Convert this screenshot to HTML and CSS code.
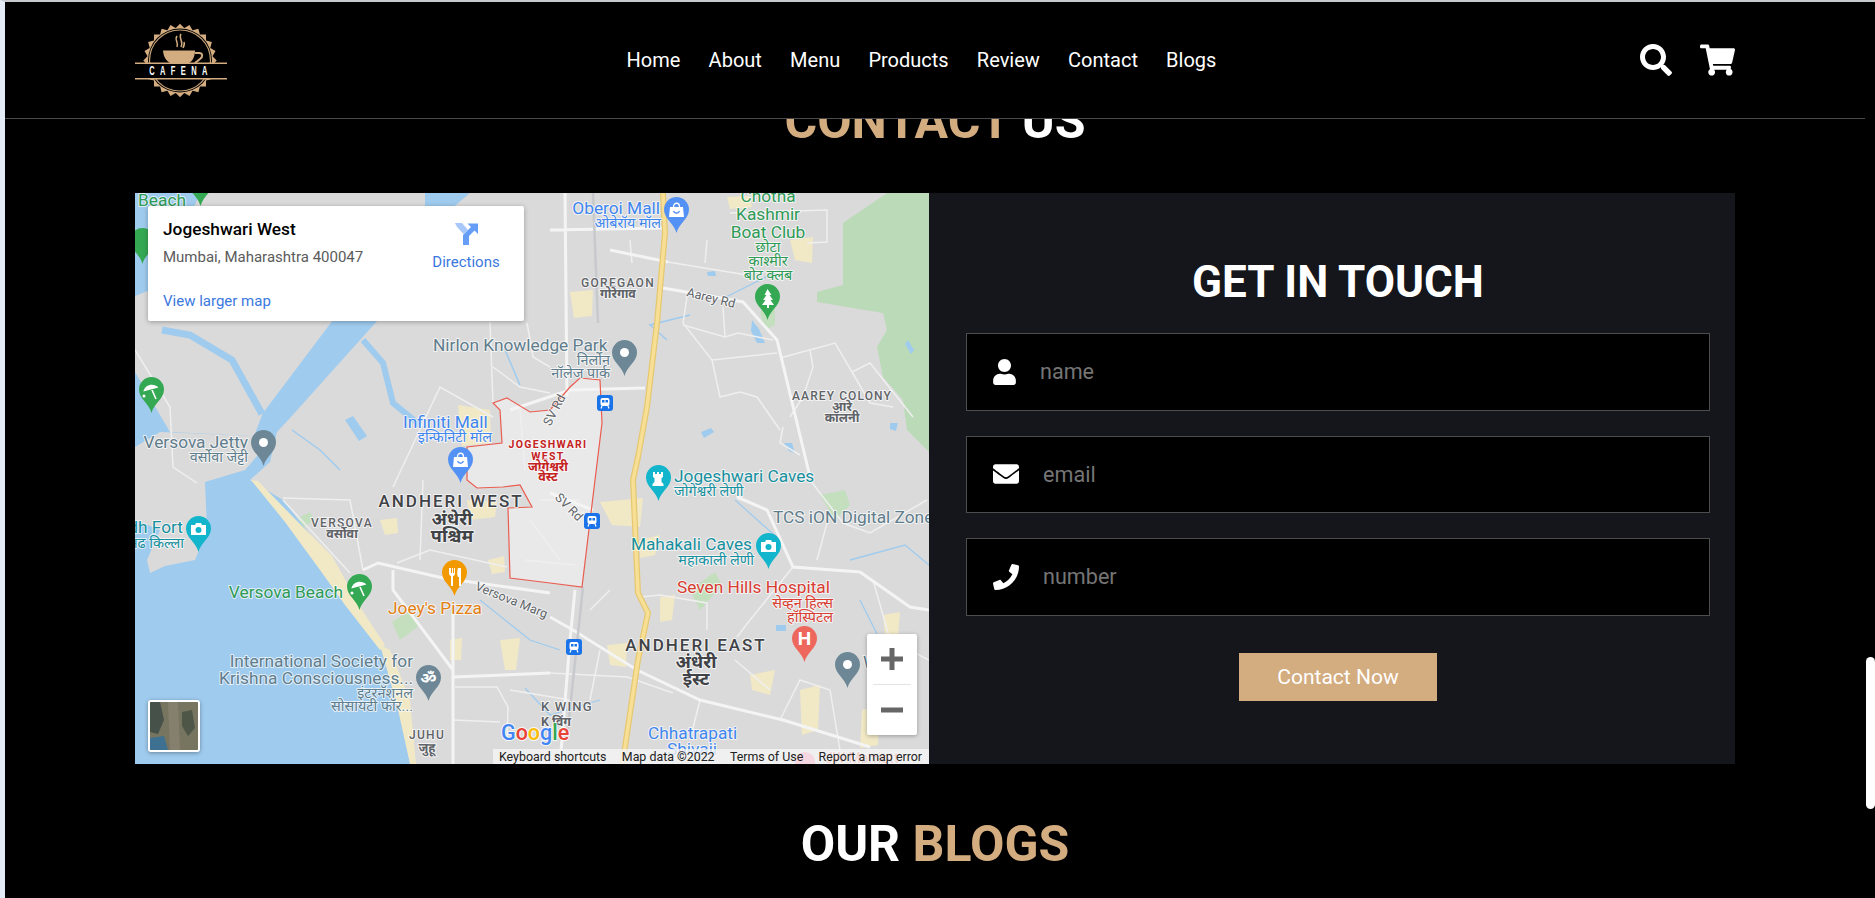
FILE: index.html
```html
<!DOCTYPE html>
<html lang="en">
<head>
    <meta charset="UTF-8">
    <meta name="viewport" content="width=device-width, initial-scale=1.0">
    <title>Cafena</title>
    <link rel="stylesheet" href="styles.css">
</head>
<body>

<header class="header">
    <a class="logo" href="#">
        <svg width="92" height="76" viewBox="135 21 92 76">
            <g fill="#d3ac7f">
                <rect x="154" y="32.500" width="52" height="52"/>
                <rect x="154" y="32.500" width="52" height="52" transform="rotate(15 180 58.500)"/>
                <rect x="154" y="32.500" width="52" height="52" transform="rotate(30 180 58.500)"/>
                <rect x="154" y="32.500" width="52" height="52" transform="rotate(45 180 58.500)"/>
                <rect x="154" y="32.500" width="52" height="52" transform="rotate(60 180 58.500)"/>
                <rect x="154" y="32.500" width="52" height="52" transform="rotate(75 180 58.500)"/>
            </g>
            <circle cx="180" cy="58.500" r="32" fill="#000"/>
            <circle cx="180" cy="58.500" r="30.500" fill="none" stroke="#c9a478" stroke-width="1.200"/>
            <path d="M163 48.500H195C195 55 192 60 188 61.500H171C166 59 163.500 55 163 48.500Z" fill="#d3ac7f"/>
            <path d="M195 51h4c4 0 4 4 1 6l-5 4" fill="none" stroke="#d3ac7f" stroke-width="2"/>
            <path d="M177 34c-3 4 2 6 0 11M181 32c-3 4 3 7 0 13M184 40c1 2 0 4-1 6" fill="none" stroke="#d3ac7f" stroke-width="1.500"/>
            <rect x="135" y="61" width="92" height="16" fill="#000"/>
            <rect x="135" y="60.500" width="92" height="1.500" fill="#d3ac7f"/>
            <rect x="135" y="76" width="92" height="1.500" fill="#d3ac7f"/>
            <text class="logo-text" transform="translate(181 73) scale(.6 1)" text-anchor="middle">CAFENA</text>
        </svg>
    </a>
    <nav class="nav">
        <a href="#">Home</a>
        <a href="#">About</a>
        <a href="#">Menu</a>
        <a href="#">Products</a>
        <a href="#">Review</a>
        <a href="#">Contact</a>
        <a href="#">Blogs</a>
    </nav>
    <div class="header-icons">
        <svg class="icon-search" viewBox="0 0 512 512"><path d="M505 442.700L405.300 343c-4.500-4.500-10.600-7-17-7H372c27.600-35.300 44-79.700 44-128C416 93.100 322.900 0 208 0S0 93.100 0 208s93.100 208 208 208c48.300 0 92.700-16.400 128-44v16.300c0 6.400 2.500 12.500 7 17l99.700 99.700c9.400 9.400 24.600 9.400 33.900 0l28.300-28.300c9.400-9.400 9.400-24.600.1-34zM208 336c-70.700 0-128-57.200-128-128 0-70.700 57.200-128 128-128 70.700 0 128 57.200 128 128 0 70.700-57.200 128-128 128z"/></svg>
        <svg class="icon-cart" viewBox="0 0 576 512"><path d="M528.120 301.319l47.273-208C578.806 78.301 567.391 64 551.990 64H159.208l-9.166-44.810C147.758 8.021 137.930 0 126.529 0H24C10.745 0 0 10.745 0 24v16c0 13.255 10.745 24 24 24h69.883l70.248 343.435C147.325 417.100 136 435.222 136 456c0 30.928 25.072 56 56 56s56-25.072 56-56c0-15.674-6.447-29.835-16.824-40h209.647C430.447 426.165 424 440.326 424 456c0 30.928 25.072 56 56 56s56-25.072 56-56c0-22.172-12.888-41.332-31.579-50.405l5.517-24.276c3.413-15.018-8.002-29.319-23.403-29.319H218.117l-6.545-32h293.145c11.206 0 20.920-7.754 23.403-18.681z"/></svg>
    </div>
</header>

<main class="main">
    <h1 class="heading"><span class="tan">CONTACT</span> US</h1>

    <section class="contact">
        <div class="map">
            <svg class="map-canvas" viewBox="135 193 794 571" width="794" height="571">
                <defs>
                    <path id="pin" d="M12.500 36C10 26 0 22 0 12.500A12.500 12.500 0 1 1 25 12.500C25 22 15 26 12.500 36Z"/>
                    <g id="metro">
                        <rect width="16" height="16" rx="3" fill="#1a73e8"/>
                        <rect x="3.500" y="3" width="9" height="8" rx="2" fill="#fff"/>
                        <rect x="5" y="5" width="2.500" height="2.500" fill="#1a73e8"/>
                        <rect x="8.500" y="5" width="2.500" height="2.500" fill="#1a73e8"/>
                        <path d="M5 11l-1 2.500M11 11l1 2.500" stroke="#fff" stroke-width="1.200"/>
                    </g>
                    <g id="bag">
                        <path d="M0 4h13l1 10H-1Z" fill="#fff"/>
                        <path d="M3.500 4c0-5 6-5 6 0" fill="none" stroke="#fff" stroke-width="1.300"/>
                        <path d="M3.500 8c1 3 5 3 6 0" fill="none" stroke="#5491f5" stroke-width="1.300"/>
                    </g>
                    <g id="brolly">
                        <path d="M3 12C3 5 11 1 17 5Z" fill="#fff" transform="rotate(12 10 8)"/>
                        <path d="M11 9l4 9" stroke="#fff" stroke-width="1.600"/>
                        <circle cx="3" cy="15" r="1.500" fill="#fff"/>
                    </g>
                    <g id="camera">
                        <path d="M0 3h4l1-2h5l1 2h4v10H0Z" fill="#fff"/>
                        <circle cx="7.500" cy="8" r="3" fill="#12b5cb"/>
                    </g>
                </defs>

                <rect x="135" y="193" width="794" height="571" fill="#dadada"/>

                <!-- forest on the right -->
                <path d="M887 193L843 223V285L817 292V302L883 313L887 330L877 347L883 377L903 400L907 430L929 452V193Z" fill="#bbdab8"/>

                <!-- sea and creeks -->
                <g fill="#9fcbee">
                    <path d="M135 193H200L180 240L150 290L135 296Z"/>
                    <path d="M135 372L153 403L170 432L254 436L263 413L333 320H378L290 418L277 432L270 462L250 480L283 500L330 560L357 603L380 643L387 667L400 707L410 764H135Z"/>
                    <path d="M425 193H470L450 210L425 215Z"/>
                    <path d="M353 790Z"/>
                    <path d="M752 320l7 9l6 14l-8 0l-6 -12Z"/>
                    <path d="M775 767Z"/>
                    <path d="M908 340l6 10l-3 4l-6 -10ZM890 423l8 0l-2 8l-6 -2ZM701 432l10 -4l3 4l-10 6ZM784 443l8 0l3 10l-6 -2ZM707 272l8 -1l1 5l-8 0ZM345 420l8 -4l14 20l-8 5ZM776 625h10v6h-10Z"/>
                </g>
                <g fill="none" stroke="#9fcbee">
                    <path d="M262 414L232 360L190 335L162 330" stroke-width="7"/>
                    <path d="M363 340L383 363L393 403L420 425" stroke-width="6"/>
                    <path d="M292 430L320 450L340 470M505 350L520 385M667 340L650 325L690 315" stroke-width="1.500"/>
                    <path d="M780 270L720 300M735 500L780 540M480 600L530 640L560 650M850 560L905 545L929 565M860 600L880 640L890 690M525 688L550 715L600 700" stroke-width="1.300"/>
                </g>

                <!-- islands -->
                <path d="M135 447L160 432L254 436L258 455L245 470L205 482L207 530L195 560L165 566L150 573L147 560L160 530L135 520Z" fill="#dadada"/>

                <!-- sand and built up patches -->
                <g fill="#f1e8c6">
                    <path d="M251 480L258 481L296 520L332 556L362 610L385 645L380 650L345 605L320 570L285 522Z"/>
                    <path d="M380 645L390 650L410 700L416 764H410L397 705Z"/>
                    <path d="M458 405L490 410L491 443L462 446Z"/>
                    <path d="M467 500L497 502L495 517L470 520Z"/>
                    <path d="M380 520L397 518L398 533L385 535Z"/>
                    <path d="M488 560L504 556L505 572L492 574Z"/>
                    <path d="M570 292L593 290L592 316L574 318Z"/>
                    <path d="M727 197L750 196L752 207L730 209Z"/>
                    <path d="M790 240L813 237L812 263L795 260Z"/>
                    <path d="M600 502L643 498L640 527L612 525Z"/>
                    <path d="M660 597L675 595L672 620L660 622Z"/>
                    <path d="M607 645L627 643L626 667L610 665Z"/>
                    <path d="M750 675L775 670L770 695L752 690Z"/>
                    <path d="M800 690L820 685L818 730L802 735Z"/>
                    <path d="M883 615L900 612L898 637L885 635Z"/>
                    <path d="M862 710L880 705L878 745L860 748Z"/>
                    <path d="M450 640L462 638L461 660L450 660Z"/>
                    <path d="M500 640L520 638L516 670L505 670Z"/>
                    <path d="M640 540L660 535L655 555L640 558Z"/>
                </g>

                <!-- small green parks -->
                <g fill="#c3dfbd">
                    <path d="M760 312L775 300L775 325L765 330Z"/>
                    <path d="M690 590L715 572L722 585L700 610Z"/>
                    <path d="M392 622L412 610L420 625L400 640Z"/>
                    <path d="M820 495L845 490L850 505L835 520Z"/>
                    <path d="M298 518L310 512L314 520L304 527Z"/>
                </g>

                <!-- district -->
                <path d="M493 403L507 398L530 412L550 410L570 387L580 378L600 380L602 423L595 480L582 587L550 583L510 578L508 508L532 507L520 485L503 487L477 488L467 480L467 447L502 443L500 410Z" fill="#e9e9e9"/>

                <!-- roads -->
                <g fill="none" stroke="#efefef" stroke-width="1.500">
                    <path d="M135 350L170 407L173 467L197 483"/>
                    <path d="M283 498L350 500L363 570M283 500L350 573"/>
                    <path d="M423 480L420 560M397 563L430 550L507 567M393 487L440 387L493 417M490 322L493 403M527 323L533 357L550 367M493 367L520 387L550 393"/>
                    <path d="M455 687L497 687L508 707L507 740M453 720L500 722M510 690L570 700"/>
                    <path d="M630 240L632 263M707 240L705 263M723 307L725 337M683 323L712 360L720 397L740 392L757 397L780 430"/>
                    <path d="M687 297L683 323M683 325L725 337L738 333L773 340M712 360L777 353M780 358L835 343L852 372L870 363L913 417"/>
                    <path d="M852 372L870 403L893 407M810 350L813 367L803 397L790 417M783 427L780 443L800 455"/>
                    <path d="M730 213L827 210L827 242L807 243M668 262L747 275"/>
                    <path d="M793 567L750 620L737 637M640 597L660 595L707 603L707 630M810 480L843 523L870 533L927 500M817 560L827 523"/>
                    <path d="M550 673L627 677L673 693M700 700L690 740M735 660L770 690M590 610L610 590M600 650L590 700"/>
                    <path d="M520 410L525 470M540 500L580 500M530 520L560 560M525 560L575 565"/>
                    <path d="M873 580L890 640L929 660M780 720L800 680L830 690L840 750"/>
                </g>
                <g fill="none" stroke="#f4f4f4" stroke-width="3">
                    <path d="M363 570L378 563L443 578L550 593"/>
                    <path d="M393 570L393 590L453 670M453 613L453 764M453 677L550 673"/>
                    <path d="M565 193L567 397M550 230L663 228M663 288L743 302L777 340L810 477M668 262L610 250"/>
                    <path d="M510 410L570 390L645 388M550 493L593 510"/>
                    <path d="M550 617L573 630L637 670L700 700L783 720L870 747"/>
                    <path d="M737 497L767 510L793 567L860 572L910 607L929 610"/>
                    <path d="M575 590L570 640L560 764"/>
                </g>
                <path d="M593 193L598 323M583 587L567 737" fill="none" stroke="#c8c9cc" stroke-width="2.500"/>

                <!-- district outline goes over the roads -->
                <path d="M493 403L507 398L530 412L550 410L570 387L580 378L600 380L602 423L595 480L582 587L550 583L510 578L508 508L532 507L520 485L503 487L477 488L467 480L467 447L502 443L500 410Z" fill="none" stroke="#ea5c50" stroke-width="1.200"/>

                <!-- highway -->
                <path d="M663 193L665 233L657 323L647 407L638 457L633 480L638 593L648 613L638 660L625 747L622 764" fill="none" stroke="#e6c873" stroke-width="6"/>
                <path d="M663 193L665 233L657 323L647 407L638 457L633 480L638 593L648 613L638 660L625 747L622 764" fill="none" stroke="#f7df95" stroke-width="3.500"/>

                <!-- pins -->
                <use href="#pin" x="664" y="197" fill="#5491f5"/>
                <use href="#pin" x="755" y="284" fill="#34a853"/>
                <use href="#pin" x="612" y="340" fill="#6d8796"/>
                <use href="#pin" x="646" y="465" fill="#12b5cb"/>
                <use href="#pin" x="448" y="447" fill="#5491f5"/>
                <use href="#pin" x="251" y="430" fill="#6d8796"/>
                <use href="#pin" x="139" y="377" fill="#34a853"/>
                <use href="#pin" x="188" y="170" fill="#34a853"/>
                <use href="#pin" x="130" y="228" fill="#34a853"/>
                <use href="#pin" x="186" y="516" fill="#12b5cb"/>
                <use href="#pin" x="347" y="574" fill="#34a853"/>
                <use href="#pin" x="442" y="560" fill="#f29900"/>
                <use href="#pin" x="416" y="665" fill="#6d8796"/>
                <use href="#pin" x="756" y="533" fill="#12b5cb"/>
                <use href="#pin" x="792" y="626" fill="#ee675c"/>
                <use href="#pin" x="835" y="652" fill="#6d8796"/>

                <!-- pin glyphs -->
                <g fill="#fff">
                    <circle cx="624.500" cy="352.500" r="4.500"/>
                    <circle cx="263.500" cy="442.500" r="4.500"/>
                    <circle cx="847.500" cy="664.500" r="4.500"/>
                    <path d="M767.500 289l4 6h-2l3.500 5h-2.500l3.500 5h-5v3h-2v-3h-5l3.500-5h-2.500l3.500-5h-2Z"/>
                    <path d="M653 472h2v2h2v-2h2v2h2v-2h2v5l-1.500 1v4l2 2v2h-11v-2l2-2v-4l-1.500-1Z"/>
                    <path d="M449 568v5c0 2 1 3 2 3v10h2v-10c1 0 2-1 2-3v-5h-1v5h-1v-5h-1v5h-1v-5ZM458 568c-1 2-1 8 0 9h1v9h2v-18Z"/>
                </g>
                <use href="#bag" x="670" y="203"/>
                <use href="#bag" x="454" y="453"/>
                <use href="#brolly" x="141" y="381"/>
                <use href="#brolly" x="349" y="578"/>
                <use href="#camera" x="191" y="522"/>
                <use href="#camera" x="761" y="539"/>
                <text class="pin-h" x="804.500" y="645" text-anchor="middle">H</text>
                <text class="pin-om" x="428.500" y="684" text-anchor="middle">ॐ</text>

                <use href="#metro" x="597" y="395"/>
                <use href="#metro" x="584" y="513"/>
                <use href="#metro" x="566" y="639"/>

                <!-- labels -->
                <g class="lb blue">
                    <text x="660" y="214" text-anchor="end">Oberoi Mall</text>
                    <text class="hi" x="661" y="228" text-anchor="end">ओबेरॉय मॉल</text>
                    <text x="403" y="428">Infiniti Mall</text>
                    <text class="hi" x="492" y="442" text-anchor="end">इन्फिनिटी मॉल</text>
                    <text x="648" y="739">Chhatrapati</text>
                    <text x="667" y="755">Shivaji</text>
                </g>
                <g class="lb green">
                    <text x="768" y="202" text-anchor="middle">Chotha</text>
                    <text x="768" y="220" text-anchor="middle">Kashmir</text>
                    <text x="768" y="238" text-anchor="middle">Boat Club</text>
                    <text class="hi" x="768" y="252" text-anchor="middle">छोटा</text>
                    <text class="hi" x="768" y="266" text-anchor="middle">काश्मीर</text>
                    <text class="hi" x="768" y="280" text-anchor="middle">बोट क्लब</text>
                    <text x="343" y="598" text-anchor="end">Versova Beach</text>
                    <text x="186" y="206" text-anchor="end">Beach</text>
                </g>
                <g class="lb slate">
                    <text x="433" y="351">Nirlon Knowledge Park</text>
                    <text class="hi" x="610" y="365" text-anchor="end">निर्लोन</text>
                    <text class="hi" x="610" y="378" text-anchor="end">नॉलेज पार्क</text>
                    <text x="248" y="448" text-anchor="end">Versova Jetty</text>
                    <text class="hi" x="248" y="462" text-anchor="end">वर्सोवा जेट्टी</text>
                    <text x="413" y="667" text-anchor="end">International Society for</text>
                    <text x="413" y="684" text-anchor="end">Krishna Consciousness...</text>
                    <text class="hi" x="413" y="698" text-anchor="end">इंटरनॅशनल</text>
                    <text class="hi" x="413" y="711" text-anchor="end">सोसायटी फॉर...</text>
                    <text x="773" y="523">TCS iON Digital Zone</text>
                    <text x="863" y="668">Westin</text>
                </g>
                <g class="lb teal">
                    <text x="674" y="482">Jogeshwari Caves</text>
                    <text class="hi" x="674" y="496">जोगेश्वरी लेणी</text>
                    <text x="183" y="533" text-anchor="end">Madh Fort</text>
                    <text class="hi" x="184" y="548" text-anchor="end">मढ किल्ला</text>
                    <text x="752" y="550" text-anchor="end">Mahakali Caves</text>
                    <text class="hi" x="754" y="565" text-anchor="end">महाकाली लेणी</text>
                </g>
                <g class="lb red">
                    <text x="677" y="593">Seven Hills Hospital</text>
                    <text class="hi" x="833" y="608" text-anchor="end">सेव्हन हिल्स</text>
                    <text class="hi" x="833" y="622" text-anchor="end">हॉस्पिटल</text>
                </g>
                <g class="lb orange">
                    <text x="388" y="614">Joey's Pizza</text>
                </g>
                <g class="lb place">
                    <text x="618" y="287" text-anchor="middle">GOREGAON</text>
                    <text class="hi-b" x="618" y="298" text-anchor="middle">गोरेगाव</text>
                    <text class="aarey" x="842" y="400" text-anchor="middle">AAREY COLONY</text>
                    <text class="hi-b" x="842" y="411" text-anchor="middle">आरे</text>
                    <text class="hi-b" x="842" y="422" text-anchor="middle">कॉलनी</text>
                    <text x="342" y="527" text-anchor="middle">VERSOVA</text>
                    <text class="hi-b" x="342" y="538" text-anchor="middle">वर्सोवा</text>
                    <text x="427" y="739" text-anchor="middle">JUHU</text>
                    <text class="hi-b" x="427" y="752" text-anchor="middle">जुहू</text>
                </g>
                <g class="lb big">
                    <text x="451" y="507" text-anchor="middle">ANDHERI WEST</text>
                    <text class="hi-c" x="452" y="525" text-anchor="middle">अंधेरी</text>
                    <text class="hi-c" x="452" y="542" text-anchor="middle">पश्चिम</text>
                    <text x="696" y="651" text-anchor="middle">ANDHERI EAST</text>
                    <text class="hi-c" x="696" y="668" text-anchor="middle">अंधेरी</text>
                    <text class="hi-c" x="696" y="685" text-anchor="middle">ईस्ट</text>
                    <text class="small-big" x="541" y="711">K WING</text>
                    <text class="hi-b" x="541" y="726">K विंग</text>
                </g>
                <g class="lb district">
                    <text x="548" y="448" text-anchor="middle">JOGESHWARI</text>
                    <text x="548" y="460" text-anchor="middle">WEST</text>
                    <text class="hi-b" x="548" y="471" text-anchor="middle">जोगेश्वरी</text>
                    <text class="hi-b" x="548" y="481" text-anchor="middle">वेस्ट</text>
                </g>
                <g class="lb road">
                    <text transform="translate(710 302) rotate(14)" text-anchor="middle">Aarey Rd</text>
                    <text transform="translate(510 604) rotate(22)" text-anchor="middle">Versova Marg</text>
                    <text transform="translate(566 510) rotate(45)" text-anchor="middle">SV Rd</text>
                    <text transform="translate(558 412) rotate(-62)" text-anchor="middle">SV Rd</text>
                </g>
                <text class="google" x="501" y="740"><tspan fill="#4285f4">G</tspan><tspan fill="#ea4335">o</tspan><tspan fill="#fbbc05">o</tspan><tspan fill="#4285f4">g</tspan><tspan fill="#34a853">l</tspan><tspan fill="#ea4335">e</tspan></text>
                <circle cx="805" cy="762" r="10" fill="#ee5f93"/>
                <text class="lb red" x="825" y="763">JW Marriott</text>
            </svg>

            <div class="place-card">
                <div class="place-info">
                    <div class="place-name">Jogeshwari West</div>
                    <div class="place-addr">Mumbai, Maharashtra 400047</div>
                    <a class="place-link" href="#">View larger map</a>
                </div>
                <a class="place-dir" href="#">
                    <svg width="24" height="24" viewBox="0 0 24 24"><path d="M1 2H8L14 9L9.500 13L3 6Z" fill="#a8c7fa"/><path d="M9 24V14L17 6L13.500 2.500H24V13L20.500 9.500L15 15V24Z" fill="#669df6"/></svg>
                    <span>Directions</span>
                </a>
            </div>

            <div class="sat-thumb">
                <svg width="48" height="48" viewBox="0 0 48 48">
                    <rect width="48" height="48" fill="#77755f"/>
                    <path d="M0 0H10L14 18L8 32L0 30Z" fill="#46514a"/>
                    <path d="M32 10L42 8L45 26L38 34L32 24Z" fill="#4e5647"/>
                    <path d="M0 36L14 34L18 48H0Z" fill="#3d7091"/>
                    <path d="M18 0H28L30 48H20Z" fill="#85806e"/>
                </svg>
            </div>

            <div class="zoom-ctl">
                <button class="zoom-btn" type="button">
                    <svg width="24" height="24" viewBox="0 0 24 24"><path d="M9.500 1h5v8.500H23v5h-8.500V23h-5v-8.500H1v-5h8.500Z" fill="#666"/></svg>
                </button>
                <div class="zoom-sep"></div>
                <button class="zoom-btn" type="button">
                    <svg width="24" height="24" viewBox="0 0 24 24"><rect x="1" y="9.500" width="22" height="5" fill="#666"/></svg>
                </button>
            </div>

            <div class="map-foot">
                <span>Keyboard shortcuts</span>
                <span>Map data ©2022</span>
                <span>Terms of Use</span>
                <span>Report a map error</span>
            </div>
        </div>

        <form class="form">
            <h3 class="form-title">GET IN TOUCH</h3>
            <div class="field">
                <svg class="field-icon" width="23" height="26" viewBox="0 0 448 512"><path d="M224 256c70.700 0 128-57.300 128-128S294.700 0 224 0 96 57.300 96 128s57.300 128 128 128zm89.600 32h-16.700c-22.200 10.200-46.900 16-72.900 16s-50.600-5.800-72.900-16h-16.700C60.200 288 0 348.200 0 422.400V464c0 26.500 21.500 48 48 48h352c26.500 0 48-21.500 48-48v-41.600c0-74.200-60.200-134.400-134.400-134.400z"/></svg>
                <input class="name-input" type="text" placeholder="name">
            </div>
            <div class="field">
                <svg class="field-icon" width="26" height="26" viewBox="0 0 512 512"><path d="M502.300 190.800c3.900-3.100 9.700-.2 9.700 4.700V400c0 26.500-21.500 48-48 48H48c-26.500 0-48-21.500-48-48V195.600c0-5 5.700-7.800 9.700-4.700 22.400 17.400 52.100 39.500 154.100 113.600 21.100 15.400 56.700 47.800 92.200 47.600 35.700.3 72-32.800 92.300-47.600 102-74.100 131.600-96.300 154-113.700zM256 320c23.200.4 56.600-29.200 73.400-41.400 132.700-96.300 142.800-104.700 173.400-128.700 5.800-4.500 9.200-11.500 9.200-18.900v-19c0-26.500-21.500-48-48-48H48C21.500 64 0 85.500 0 112v19c0 7.400 3.400 14.300 9.200 18.900 30.600 23.900 40.700 32.400 173.400 128.700 16.800 12.200 50.200 41.800 73.400 41.400z"/></svg>
                <input type="email" placeholder="email">
            </div>
            <div class="field">
                <svg class="field-icon" width="26" height="26" viewBox="0 0 512 512"><path d="M493.400 24.600l-104-24c-11.300-2.600-22.900 3.300-27.500 13.900l-48 112c-4.200 9.800-1.400 21.300 6.900 28l60.600 49.600c-36 76.700-98.900 140.500-177.200 177.200l-49.600-60.600c-6.800-8.300-18.200-11.100-28-6.900l-112 48C3.900 366.500-2 378.100.6 389.400l24 104C27.100 504.200 36.700 512 48 512c256.100 0 464-207.500 464-464 0-11.200-7.700-20.900-18.600-23.400z"/></svg>
                <input type="text" placeholder="number">
            </div>
            <button class="submit" type="button">Contact Now</button>
        </form>
    </section>

    <h1 class="heading blogs-heading">OUR <span class="tan">BLOGS</span></h1>
</main>

<div class="scroll-thumb"></div>

</body>
</html>
```

FILE: styles.css
```css
* {
    box-sizing: border-box;
}
html, body {
    height: 100%;
}
body {
    position: relative;
    overflow: hidden;
    margin: 0;
    height: 898px;
    background: #000;
    border-top: 2px solid #c6cacf;
    border-left: 5px solid #e3ebf6;
    font-family: Roboto, "Noto Sans", sans-serif;
    color: #fff;
}
a {
    color: inherit;
    text-decoration: none;
}

/* header sits over the page */
.header {
    position: absolute;
    top: 0;
    left: 0;
    right: 10px;
    z-index: 5;
    height: 117px;
    padding: 0 130px;
    display: flex;
    align-items: center;
    justify-content: space-between;
    background: #000;
    border-bottom: 1px solid #4a4a4a;
}
.logo {
    display: flex;
    margin-top: 2px;
}
.logo-text {
    font: 700 12.500px "Liberation Sans", sans-serif;
    letter-spacing: 9px;
    fill: #fff;
}
.nav {
    display: flex;
    gap: 28.200px;
    margin-right: 24px;
    font-size: 20px;
}
.header-icons {
    display: flex;
    gap: 28px;
    align-items: center;
    fill: #fff;
    margin-top: -1px;
}
.icon-search {
    width: 32px;
    height: 32px;
}
.icon-cart {
    width: 35px;
    height: 32px;
}

.main {
    padding-right: 10px;
}
.heading {
    margin: 0;
    height: 191px;
    padding-top: 90px;
    font-size: 50px;
    line-height: 58px;
    font-weight: 700;
    text-align: center;
}
.blogs-heading {
    height: auto;
    padding-top: 51px;
}
.tan {
    color: #d3ac7f;
}

.contact {
    width: 1600px;
    margin: 0 auto;
    display: grid;
    grid-template-columns: 794px 806px;
    height: 571px;
}

/* map */
.map {
    position: relative;
    overflow: hidden;
    background: #dadada;
}
.map-canvas {
    display: block;
}
.lb text, text.lb {
    font-family: Roboto, "Noto Sans Devanagari", "Noto Sans", sans-serif;
    font-size: 17.300px;
    paint-order: stroke;
    stroke: rgba(255, 255, 255, 0.7);
    stroke-width: 2px;
    stroke-linejoin: round;
}
text.lb {
    font-size: 14px;
}
.lb .hi {
    font-size: 14.400px;
}
.lb .hi-b {
    font-size: 12.500px;
    font-weight: 700;
    letter-spacing: 0;
}
.lb .hi-c {
    font-size: 18px;
    font-weight: 700;
    letter-spacing: 0;
}
.blue text {
    fill: #3f86ef;
}
.green text {
    fill: #2e9a55;
}
.slate text {
    fill: #5f7d8c;
}
.teal text {
    fill: #16909f;
}
.red text, text.red {
    fill: #d93d32;
}
.orange text {
    fill: #e37f12;
}
.place text {
    font-size: 12px;
    font-weight: 500;
    letter-spacing: 1.300px;
    fill: #5f6368;
}
.place .aarey {
    letter-spacing: 1.100px;
}
.big text {
    font-size: 17px;
    font-weight: 500;
    letter-spacing: 2px;
    fill: #3f4246;
}
.big .small-big {
    font-size: 13px;
    letter-spacing: 1.200px;
    fill: #5f6368;
}
.big .hi-b {
    fill: #5f6368;
}
.district text {
    font-size: 10.500px;
    font-weight: 700;
    letter-spacing: 1.300px;
    fill: #c5221f;
}
.road text {
    font-size: 12.500px;
    fill: #606468;
}
.pin-h {
    font: 700 19px Roboto, sans-serif;
    fill: #fff;
}
.pin-om {
    font: 700 16px "Noto Sans", sans-serif;
    fill: #fff;
}
.google {
    font: 500 21.500px Roboto, sans-serif;
    paint-order: stroke;
    stroke: rgba(255, 255, 255, 0.8);
    stroke-width: 2px;
}

.place-card {
    position: absolute;
    top: 13px;
    left: 13px;
    width: 376px;
    height: 115px;
    padding: 13px 16px 13px 15px;
    display: flex;
    justify-content: space-between;
    background: #fff;
    border-radius: 2px;
    box-shadow: 0 1px 5px rgba(0, 0, 0, 0.3);
}
.place-name {
    font-size: 17.300px;
    font-weight: 500;
    line-height: 20px;
    color: #000;
}
.place-addr {
    margin-top: 9px;
    font-size: 15px;
    line-height: 18px;
    color: #5b5b5b;
}
.place-link {
    display: block;
    margin-top: 26px;
    font-size: 15px;
    line-height: 18px;
    color: #3a78e0;
}
.place-dir {
    display: flex;
    flex-direction: column;
    align-items: center;
    width: 72px;
    margin-right: 6px;
    padding-top: 2px;
    font-size: 15px;
    color: #3a78e0;
}
.place-dir span {
    margin-top: 8px;
}

.sat-thumb {
    position: absolute;
    left: 13px;
    top: 507px;
    width: 52px;
    height: 52px;
    border: 2px solid #fff;
    border-radius: 3px;
    overflow: hidden;
    box-shadow: 0 1px 4px rgba(0, 0, 0, 0.35);
}
.sat-thumb svg {
    display: block;
}

.zoom-ctl {
    position: absolute;
    left: 732px;
    top: 441px;
    width: 50px;
    height: 101px;
    display: flex;
    flex-direction: column;
    background: #fff;
    border-radius: 2px;
    box-shadow: 0 1px 4px rgba(0, 0, 0, 0.3);
}
.zoom-btn {
    flex: 1;
    padding: 0;
    border: 0;
    background: none;
    display: flex;
    align-items: center;
    justify-content: center;
}
.zoom-sep {
    height: 1px;
    margin: 0 6px;
    background: #e4e4e4;
}
.map-foot {
    position: absolute;
    right: 0;
    bottom: 0;
    left: 358px;
    height: 15px;
    padding: 0 7px 0 6px;
    display: flex;
    justify-content: space-between;
    align-items: center;
    background: rgba(245, 245, 245, 0.8);
    font-size: 12.400px;
    color: #222;
}

/* form */
.form {
    height: 571px;
    padding: 0 25px 0 37px;
    display: flex;
    flex-direction: column;
    align-items: center;
    background: #14161b;
}
.form-title {
    margin: 49px 0 0;
    font-size: 44px;
    line-height: 80px;
    font-weight: 700;
}
.field {
    width: 100%;
    height: 77.500px;
    margin-bottom: 25px;
    padding-left: 26px;
    display: flex;
    align-items: center;
    background: #000;
    border: 1px solid #4d4d4d;
    fill: #fff;
}
.field:first-of-type {
    margin-top: 11px;
}
.field-icon {
    flex: none;
}
.field input {
    flex: 1;
    height: 100%;
    margin-left: 24px;
    padding: 0;
    border: 0;
    outline: 0;
    background: none;
    font-family: Roboto, sans-serif;
    font-size: 21.600px;
    color: #fff;
}
.field input::placeholder {
    color: #757575;
}
.submit {
    width: 198px;
    height: 48px;
    margin-top: 12px;
    border: 0;
    background: #d3ac7f;
    font-family: Roboto, sans-serif;
    font-size: 21px;
    color: #fff;
}

.scroll-thumb {
    position: absolute;
    top: 655px;
    right: 0;
    width: 9px;
    height: 152px;
    background: #fff;
    border-radius: 5px;
}
```
